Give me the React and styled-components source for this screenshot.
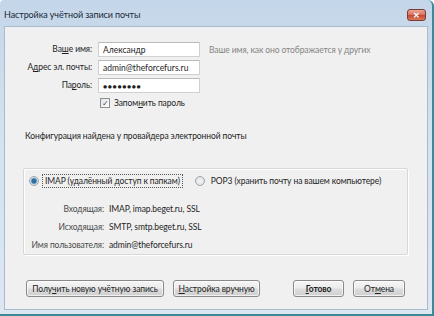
import React from "react";
import styled, { createGlobalStyle } from "styled-components";

const GlobalStyle = createGlobalStyle`
	html, body {
		margin: 0;
		padding: 0;
		background: #ffffff;
	}
	* {
		box-sizing: border-box;
	}
`;

const FONT = `Lato, "Noto Sans", sans-serif`;

const Frame = styled.div`
	width: 434px;
	height: 316px;
	display: flex;
	flex-direction: column;
	padding: 0 4px 4px 4px;
	background: linear-gradient(180deg, #c4d6e9 0%, #d3e1ee 40%, #dce7f1 100%);
	border-right: 2px solid #3b8a98;
	border-bottom: 2px solid #3b8a98;
	border-top-right-radius: 6px;
	border-top-left-radius: 4px;
	font-family: ${FONT};
	font-size: 8.5px;
	letter-spacing: -0.1px;
	color: #1e1e1e;
`;

const TitleBar = styled.div`
	height: 26px;
	display: flex;
	align-items: center;
	justify-content: space-between;
	padding: 3px 0 0 0;
`;

const Title = styled.span`
	font-size: 9px;
	color: #1a2a3a;
`;

const CloseButton = styled.div`
	width: 19px;
	height: 12px;
	margin-right: 2px;
	border: 1px solid #7d3a30;
	border-radius: 3px;
	background: linear-gradient(180deg, #e9a69a 0%, #d7705e 50%, #c24a36 55%, #d97a5e 100%);
	display: flex;
	align-items: center;
	justify-content: center;
	color: #ffffff;
	font-size: 8px;
	font-weight: bold;
	line-height: 1;
`;

const Panel = styled.div`
	flex: 1;
	background: #f0f0f0;
	border: 1px solid #a9bccd;
	padding: 15px 0 0 0;
	display: flex;
	flex-direction: column;
`;

const FormGrid = styled.div`
	display: grid;
	grid-template-columns: 87px 102px auto;
	column-gap: 6px;
	row-gap: 3px;
	align-items: center;
`;

const FieldLabel = styled.label`
	text-align: right;
	white-space: nowrap;
	line-height: 15px;
`;

const Input = styled.div`
	height: 15px;
	width: 102px;
	background: #ffffff;
	border: 1px solid #d0d0d0;
	border-top-color: #bababa;
	padding: 0 4px;
	display: flex;
	align-items: center;
	white-space: nowrap;
	overflow: hidden;
	font-size: ${(p) => (p.$password ? "7px" : "8.5px")};
	letter-spacing: ${(p) => (p.$password ? "0.6px" : "0")};
`;

const Hint = styled.span`
	color: #858585;
	white-space: nowrap;
	padding-left: 3px;
`;

const CheckRow = styled.div`
	grid-column: 2 / 4;
	display: flex;
	align-items: center;
	gap: 4px;
	height: 14px;
	padding-left: 2px;
`;

const CheckBox = styled.span`
	width: 10px;
	height: 10px;
	border: 1px solid #8e8f8f;
	background: linear-gradient(135deg, #e4e4e4, #ffffff);
	display: flex;
	align-items: center;
	justify-content: center;
	font-size: 8px;
	line-height: 1;
	color: #2a4a7a;
`;

const FoundText = styled.div`
	margin: 19px 0 0 20px;
	line-height: 14px;
	white-space: nowrap;
`;

const GroupBox = styled.div`
	margin: 25px 0 0 18px;
	width: 385px;
	height: 87px;
	border: 1px solid #d8d8d8;
	box-shadow: inset 1px 1px 0 #ffffff, 1px 1px 0 #ffffff;
	border-radius: 2px;
	padding: 5px 0 0 5px;
	display: flex;
	flex-direction: column;
`;

const RadioRow = styled.div`
	display: flex;
	align-items: center;
	height: 14px;
`;

const Radio = styled.span`
	width: 10px;
	height: 10px;
	border-radius: 50%;
	border: 1px solid #a0a6ac;
	background: ${(p) =>
		p.$checked
			? "radial-gradient(circle, #2f6f9f 0 2px, #8fb7d6 3px, #eef2f5 4px)"
			: "radial-gradient(circle, #f6f6f6 0, #dadada 100%)"};
	flex-shrink: 0;
`;

const RadioLabel = styled.span`
	margin-left: 3px;
	padding: 0 2px;
	height: 14px;
	line-height: 12px;
	white-space: nowrap;
	border: 1px ${(p) => (p.$focused ? "dotted #555" : "solid transparent")};
	margin-right: ${(p) => (p.$focused ? "12px" : "0")};
`;

const InfoGrid = styled.div`
	margin-top: 14px;
	display: grid;
	grid-template-columns: 75px auto;
	column-gap: 5px;
	row-gap: 4px;
	line-height: 14px;
`;

const InfoLabel = styled.span`
	text-align: right;
	color: #4a4a4a;
	white-space: nowrap;
`;

const InfoValue = styled.span`
	white-space: nowrap;
`;

const ButtonRow = styled.div`
	margin: 25px 0 0 21px;
	width: 379px;
	display: flex;
	gap: 9px;
`;

const Spacer = styled.div`
	flex: 1;
`;

const Button = styled.button`
	height: 17px;
	width: ${(p) => p.$width}px;
	padding: 0;
	font-family: ${FONT};
	font-size: 8.5px;
	letter-spacing: -0.1px;
	font-weight: ${(p) => (p.$default ? "bold" : "normal")};
	color: #1e1e1e;
	border: 1px solid #8a8a8a;
	border-radius: 3px;
	background: linear-gradient(180deg, #f6f6f6 0%, #ebebeb 48%, #dddddd 52%, #cfcfcf 100%);
	box-shadow: inset 0 0 0 1px rgba(255, 255, 255, 0.7);
	white-space: nowrap;
`;

const U = styled.span`
	text-decoration: underline;
`;

const App = () => {
	return (
		<>
			<GlobalStyle />
			<Frame>
				<TitleBar>
					<Title>Настройка учётной записи почты</Title>
					<CloseButton>✕</CloseButton>
				</TitleBar>
				<Panel>
					<FormGrid>
						<FieldLabel>
							Ва<U>ш</U>е имя:
						</FieldLabel>
						<Input>Александр</Input>
						<Hint>Ваше имя, как оно отображается у других</Hint>

						<FieldLabel>
							А<U>д</U>рес эл. почты:
						</FieldLabel>
						<Input>admin@theforcefurs.ru</Input>
						<span />

						<FieldLabel>
							Па<U>р</U>оль:
						</FieldLabel>
						<Input $password>●●●●●●●●</Input>
						<span />

						<span />
						<CheckRow>
							<CheckBox>✓</CheckBox>
							<span>
								Запом<U>н</U>ить пароль
							</span>
						</CheckRow>
					</FormGrid>

					<FoundText>Конфигурация найдена у провайдера электронной почты</FoundText>

					<GroupBox>
						<RadioRow>
							<Radio $checked />
							<RadioLabel $focused>IMAP (удалённый доступ к папкам)</RadioLabel>
							<Radio />
							<RadioLabel>POP3 (хранить почту на вашем компьютере)</RadioLabel>
						</RadioRow>
						<InfoGrid>
							<InfoLabel>Входящая:</InfoLabel>
							<InfoValue>IMAP, imap.beget.ru, SSL</InfoValue>
							<InfoLabel>Исходящая:</InfoLabel>
							<InfoValue>SMTP, smtp.beget.ru, SSL</InfoValue>
							<InfoLabel>Имя пользователя:</InfoLabel>
							<InfoValue>admin@theforcefurs.ru</InfoValue>
						</InfoGrid>
					</GroupBox>

					<ButtonRow>
						<Button $width={138}>
							Полу<U>ч</U>ить новую учётную запись
						</Button>
						<Button $width={87}>
							<U>Н</U>астройка вручную
						</Button>
						<Spacer />
						<Button $width={51} $default>
							<U>Г</U>отово
						</Button>
						<Button $width={52}>
							От<U>м</U>ена
						</Button>
					</ButtonRow>
				</Panel>
			</Frame>
		</>
	);
};

export default App;
